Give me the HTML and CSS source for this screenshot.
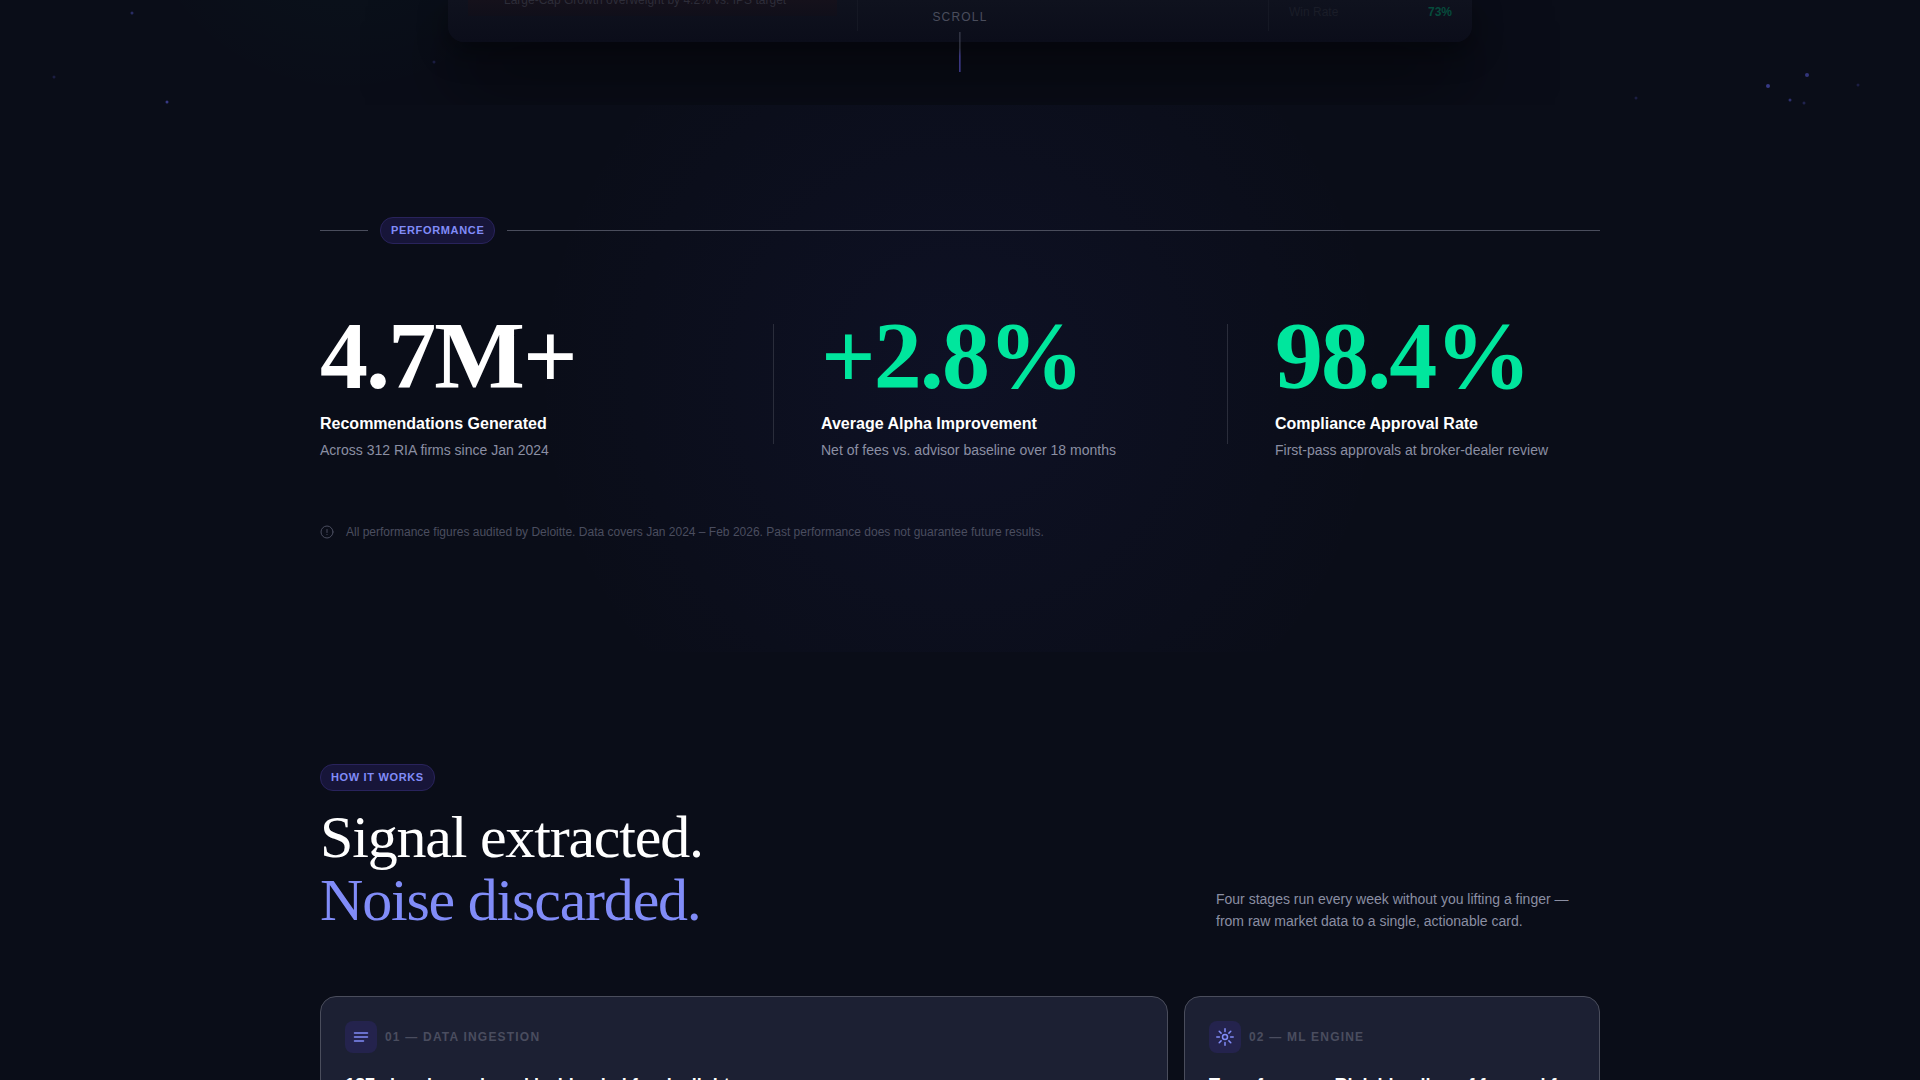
FILE: index.html
```html
<!DOCTYPE html>
<html lang="en">
<head>
    <meta charset="UTF-8">
    <meta name="viewport" content="width=device-width, initial-scale=1.0">
    <title>Performance</title>
    <link rel="stylesheet" href="styles.css">
</head>
<body>
    <!-- Hero, end of the product preview -->
    <section class="hero">
        <svg class="stars" width="100%" height="105" viewBox="0 0 1920 105" preserveAspectRatio="xMidYMax slice" aria-hidden="true">
            <g fill="#6366f1">
                <circle cx="132" cy="13" r="1.5" opacity="0.35"/>
                <circle cx="54" cy="77" r="1.5" opacity="0.2"/>
                <circle cx="167" cy="102" r="1.5" opacity="0.5"/>
                <circle cx="434" cy="62" r="1.5" opacity="0.2"/>
                <circle cx="1636" cy="98" r="1.5" opacity="0.2"/>
                <circle cx="1768" cy="86" r="2" opacity="0.5"/>
                <circle cx="1807" cy="75" r="2" opacity="0.45"/>
                <circle cx="1790" cy="100" r="1.5" opacity="0.4"/>
                <circle cx="1804" cy="103" r="1.5" opacity="0.25"/>
                <circle cx="1858" cy="85" r="1.5" opacity="0.2"/>
            </g>
        </svg>
        <div class="preview">
            <div class="preview-col">
                <div class="alert">Large-Cap Growth overweight by 4.2% vs. IPS target</div>
            </div>
            <div class="preview-col"></div>
            <div class="preview-col">
                <div class="win-rate"><span>Win Rate</span><strong>73%</strong></div>
            </div>
        </div>
        <div class="scroll-hint">
            <span>SCROLL</span>
            <div class="scroll-line"></div>
        </div>
    </section>

    <!-- Performance -->
    <section class="section performance">
        <div class="container">
            <div class="rule">
                <span class="badge">PERFORMANCE</span>
            </div>
            <div class="stats">
                <div class="stat">
                    <div class="stat-value">4.7M+</div>
                    <h3>Recommendations Generated</h3>
                    <p>Across 312 RIA firms since Jan 2024</p>
                </div>
                <div class="stat">
                    <div class="stat-value green">+2.8%</div>
                    <h3>Average Alpha Improvement</h3>
                    <p>Net of fees vs. advisor baseline over 18 months</p>
                </div>
                <div class="stat">
                    <div class="stat-value green">98.4%</div>
                    <h3>Compliance Approval Rate</h3>
                    <p>First-pass approvals at broker-dealer review</p>
                </div>
            </div>
            <div class="footnote">
                <svg width="14" height="14" viewBox="0 0 14 14" fill="none" stroke="currentColor" stroke-linecap="round" aria-hidden="true">
                    <circle cx="7" cy="7" r="6"/>
                    <path d="M7 4.5v3M7 9.4v.1"/>
                </svg>
                <p>All performance figures audited by Deloitte. Data covers Jan 2024 – Feb 2026. Past performance does not guarantee future results.</p>
            </div>
        </div>
    </section>

    <!-- How it works -->
    <section class="section">
        <div class="container">
            <div class="section-head">
                <div>
                    <span class="badge">HOW IT WORKS</span>
                    <h2>Signal extracted.<br><span>Noise discarded.</span></h2>
                </div>
                <p>Four stages run every week without you lifting a finger —<br>from raw market data to a single, actionable card.</p>
            </div>
            <div class="cards">
                <article class="card wide">
                    <div class="card-top">
                        <div class="card-icon">
                            <svg width="18" height="18" viewBox="0 0 18 18" fill="none" stroke="currentColor" stroke-width="1.5" stroke-linecap="round" aria-hidden="true">
                                <path d="M2.5 5h13M2.5 9h13M2.5 13h9"/>
                            </svg>
                        </div>
                        <span>01 — DATA INGESTION</span>
                    </div>
                    <h3>187 signals read weekly, blended for daylight</h3>
                </article>
                <article class="card">
                    <div class="card-top">
                        <div class="card-icon">
                            <svg width="18" height="18" viewBox="0 0 18 18" fill="none" stroke="currentColor" stroke-width="1.5" stroke-linecap="round" aria-hidden="true">
                                <circle cx="9" cy="9" r="2.5"/>
                                <path d="M9 .8v2.6M9 14.6v2.6M.8 9h2.6M14.6 9h2.6M3.2 3.2l1.9 1.9M12.9 12.9l1.9 1.9M3.2 14.8l1.9-1.9M12.9 5.1l1.9-1.9"/>
                            </svg>
                        </div>
                        <span>02 — ML ENGINE</span>
                    </div>
                    <h3>Transformer + Risk blending of forward fx</h3>
                </article>
            </div>
        </div>
    </section>
</body>
</html>
```
FILE: styles.css
```css
* {
    box-sizing: border-box;
}

body {
    margin: 0;
    background-color: #0a0d18;
    color: #fff;
    font-family: "Liberation Sans", Arial, sans-serif;
}

h2, h3, p {
    margin: 0;
}

.container {
    max-width: 1280px;
    margin: 0 auto;
}

/* Hero */
.hero {
    position: relative;
    height: 105px;
    overflow: hidden;
    display: flex;
    flex-direction: column;
    align-items: center;
    background: radial-gradient(circle at 18% -120px, rgba(0, 230, 157, 0.03), transparent 220px);
}

.stars {
    position: absolute;
    left: 0;
    bottom: 0;
}

.preview {
    display: grid;
    grid-template-columns: 409px 1fr 204px;
    width: 1024px;
    max-width: 100%;
    height: 42px;
    flex-shrink: 0;
    padding-bottom: 11px;
    border-radius: 0 0 16px 16px;
    background: linear-gradient(#0f121e, #0b0d1a);
    box-shadow: 0 40px 80px rgba(0, 0, 0, 0.6), 0 10px 30px rgba(0, 0, 0, 0.4);
}

.preview-col {
    display: flex;
    align-items: flex-end;
    padding: 0 20px;
}

.preview-col:first-child {
    align-items: flex-start;
}

.preview-col + .preview-col {
    border-left: 1px solid #151824;
}

.preview-col:last-child {
    padding-bottom: 9px;
}

.alert {
    flex: 1;
    height: 16px;
    padding-left: 36px;
    background: linear-gradient(#15111b, #100f1a);
    color: #2d2d39;
    font-size: 12px;
    line-height: 0;
}

.win-rate {
    flex: 1;
    display: flex;
    justify-content: space-between;
    font-size: 12px;
    line-height: 20px;
    color: #1a1d28;
}

.win-rate strong {
    color: #064b3c;
}

.scroll-hint {
    position: absolute;
    top: 8px;
    left: 50%;
    transform: translateX(-50%);
    display: flex;
    flex-direction: column;
    align-items: center;
    gap: 6px;
    font-size: 12px;
    line-height: 18px;
    letter-spacing: 0.1em;
    color: #4a4d5c;
}

.scroll-line {
    width: 1px;
    height: 40px;
    background: linear-gradient(#454859 40%, #5b54c9 60%);
}

/* Sections */
.section {
    padding: 112px 24px;
}

.performance {
    background: radial-gradient(circle at center, rgba(79, 82, 241, 0.06), transparent 430px);
}

.badge {
    display: inline-block;
    padding: 6px 10px;
    border: 1px solid #29235c;
    border-radius: 13px;
    background-color: #171539;
    color: #818cf8;
    font-size: 11px;
    font-weight: bold;
    line-height: 13px;
    letter-spacing: 0.06em;
}

.rule {
    display: flex;
    align-items: center;
    gap: 12px;
}

.rule::before,
.rule::after {
    content: "";
    width: 48px;
    height: 1px;
    background-color: #4a4d5c;
}

.rule::after {
    flex: 1;
}

.stats {
    display: grid;
    grid-template-columns: 453fr 454fr 373fr;
    margin-top: 64px;
}

.stat + .stat {
    position: relative;
    padding-left: 48px;
}

.stat + .stat::before {
    content: "";
    position: absolute;
    top: 16px;
    bottom: 16px;
    left: 0;
    width: 1px;
    background-color: #2a2d3b;
}

.stat-value {
    font-family: "Liberation Serif", "Times New Roman", serif;
    font-size: 96px;
    font-weight: bold;
    line-height: 96px;
    letter-spacing: -0.02em;
}

.green {
    color: #00e69d;
}

.stat h3 {
    margin-top: 8px;
    font-size: 16px;
    line-height: 24px;
}

.stat p {
    margin-top: 4px;
    color: #8b8fa3;
    font-size: 14px;
    line-height: 20px;
}

.footnote {
    display: flex;
    align-items: center;
    gap: 12px;
    margin-top: 64px;
    color: #4a4d5f;
    font-size: 12px;
    line-height: 16px;
}

/* How it works */
.section-head {
    display: flex;
    justify-content: space-between;
    align-items: flex-end;
}

.section-head h2 {
    margin-top: 15px;
    font-family: "Liberation Serif", "Times New Roman", serif;
    font-size: 60px;
    font-weight: normal;
    line-height: 63px;
    letter-spacing: -0.02em;
}

.section-head h2 span {
    color: #818cf8;
}

.section-head p {
    width: 384px;
    color: #8b8fa3;
    font-size: 14px;
    line-height: 22px;
}

.cards {
    display: grid;
    grid-template-columns: repeat(3, 1fr);
    gap: 16px;
    margin-top: 64px;
}

.card {
    padding: 24px;
    border: 1px solid #4a4d5c;
    border-radius: 16px;
    background-color: #1c2033;
}

.wide {
    grid-column: span 2;
}

.card-top {
    display: flex;
    align-items: center;
    gap: 8px;
    color: #4a4d5f;
    font-size: 12px;
    font-weight: bold;
    letter-spacing: 0.1em;
}

.card-icon {
    display: flex;
    align-items: center;
    justify-content: center;
    width: 32px;
    height: 32px;
    border-radius: 8px;
    background-color: #24234d;
    color: #818cf8;
}

.card h3 {
    margin-top: 20px;
    font-size: 18px;
    line-height: 24px;
}
```
